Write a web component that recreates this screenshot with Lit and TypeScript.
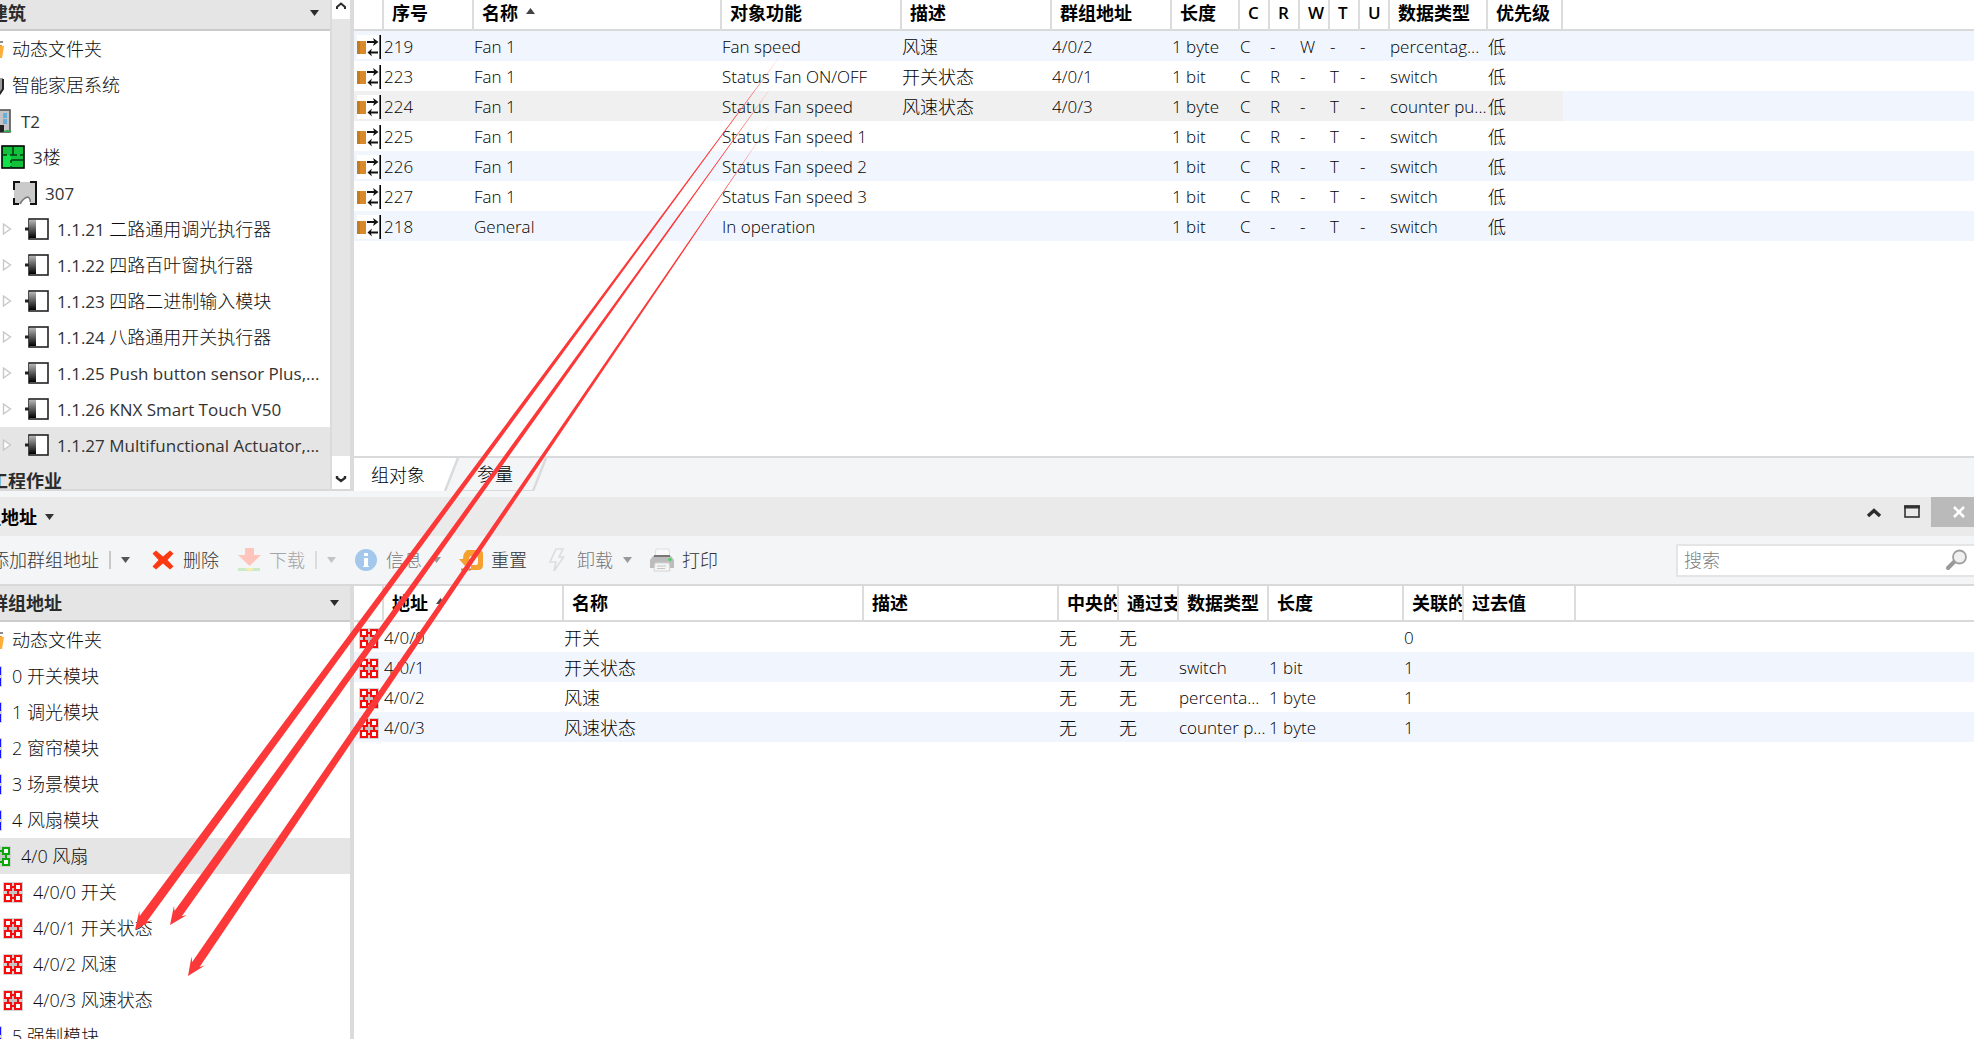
import { LitElement, html, css, svg, nothing } from "lit";
import { customElement } from "lit/decorators.js";
import { classMap } from "lit/directives/class-map.js";

interface TreeNode { level: number; icon: string; code?: string; name?: string; expander?: boolean; selected?: boolean }
interface Column { label: string; width?: number; sorted?: boolean; latin?: boolean }

const buildingTree: TreeNode[] = [
  { level: 0, icon: "folder", name: "动态文件夹" },
  { level: 0, icon: "home", name: "智能家居系统" },
  { level: 1, icon: "building", code: "T2" },
  { level: 2, icon: "floor", code: "3", name: "楼" },
  { level: 3, icon: "room", code: "307" },
  { level: 4, icon: "device", code: "1.1.21 ", name: "二路通用调光执行器", expander: true },
  { level: 4, icon: "device", code: "1.1.22 ", name: "四路百叶窗执行器", expander: true },
  { level: 4, icon: "device", code: "1.1.23 ", name: "四路二进制输入模块", expander: true },
  { level: 4, icon: "device", code: "1.1.24 ", name: "八路通用开关执行器", expander: true },
  { level: 4, icon: "device", code: "1.1.25 Push button sensor Plus,...", expander: true },
  { level: 4, icon: "device", code: "1.1.26 KNX Smart Touch V50", expander: true },
  { level: 4, icon: "device", code: "1.1.27 Multifunctional Actuator,...", expander: true, selected: true },
];

const groupTree: TreeNode[] = [
  { level: 0, icon: "folder", name: "动态文件夹" },
  { level: 0, icon: "main", code: "0 ", name: "开关模块" },
  { level: 0, icon: "main", code: "1 ", name: "调光模块" },
  { level: 0, icon: "main", code: "2 ", name: "窗帘模块" },
  { level: 0, icon: "main", code: "3 ", name: "场景模块" },
  { level: 0, icon: "main", code: "4 ", name: "风扇模块" },
  { level: 1, icon: "middle", code: "4/0 ", name: "风扇", selected: true },
  { level: 2, icon: "group", code: "4/0/0 ", name: "开关" },
  { level: 2, icon: "group", code: "4/0/1 ", name: "开关状态" },
  { level: 2, icon: "group", code: "4/0/2 ", name: "风速" },
  { level: 2, icon: "group", code: "4/0/3 ", name: "风速状态" },
  { level: 0, icon: "main", code: "5 ", name: "强制模块" },
];

const objectColumns: Column[] = [
  { label: "", width: 30 }, { label: "序号", width: 90 }, { label: "名称", width: 248, sorted: true },
  { label: "对象功能", width: 180 }, { label: "描述", width: 150 }, { label: "群组地址", width: 120 },
  { label: "长度", width: 68 }, { label: "C", width: 30, latin: true }, { label: "R", width: 30, latin: true },
  { label: "W", width: 30, latin: true }, { label: "T", width: 30, latin: true }, { label: "U", width: 30, latin: true },
  { label: "数据类型", width: 98 }, { label: "优先级", width: 75 },
];

const objectRows: string[][] = [
  ["219", "Fan 1", "Fan speed", "风速", "4/0/2", "1 byte", "C", "-", "W", "-", "-", "percentag...", "低"],
  ["223", "Fan 1", "Status Fan ON/OFF", "开关状态", "4/0/1", "1 bit", "C", "R", "-", "T", "-", "switch", "低"],
  ["224", "Fan 1", "Status Fan speed", "风速状态", "4/0/3", "1 byte", "C", "R", "-", "T", "-", "counter pu...", "低"],
  ["225", "Fan 1", "Status Fan speed 1", "", "", "1 bit", "C", "R", "-", "T", "-", "switch", "低"],
  ["226", "Fan 1", "Status Fan speed 2", "", "", "1 bit", "C", "R", "-", "T", "-", "switch", "低"],
  ["227", "Fan 1", "Status Fan speed 3", "", "", "1 bit", "C", "R", "-", "T", "-", "switch", "低"],
  ["218", "General", "In operation", "", "", "1 bit", "C", "-", "-", "T", "-", "switch", "低"],
];

const addressColumns: Column[] = [
  { label: "", width: 30 }, { label: "地址", width: 180, sorted: true }, { label: "名称", width: 300 },
  { label: "描述", width: 195 }, { label: "中央的", width: 60 }, { label: "通过支", width: 60 },
  { label: "数据类型", width: 90 }, { label: "长度", width: 135 }, { label: "关联的", width: 60 },
  { label: "过去值", width: 112 },
];

const addressRows: string[][] = [
  ["4/0/0", "开关", "", "无", "无", "", "", "0", ""],
  ["4/0/1", "开关状态", "", "无", "无", "switch", "1 bit", "1", ""],
  ["4/0/2", "风速", "", "无", "无", "percenta...", "1 byte", "1", ""],
  ["4/0/3", "风速状态", "", "无", "无", "counter p...", "1 byte", "1", ""],
];

const cluster = (color: string) => svg`
  <rect x="2" y="2" width="20" height="21" fill="#d2d2d2"/>
  <rect x="7" y="7" width="10" height="11" fill="#c4c4c4" stroke=${color} stroke-width="2"/>
  <path d="M10 9h4v2h2v4h-2v2h-4v-2H8v-4h2z" fill="#c4c4c4"/>
  <g fill="#fff" stroke=${color} stroke-width="2">
    <rect x="4" y="4" width="6" height="6"/><rect x="14" y="4" width="6" height="6"/>
    <rect x="4" y="15" width="6" height="6"/><rect x="14" y="15" width="6" height="6"/>
  </g>`;

const shapes: Record<string, unknown> = {
  folder: svg`<path d="M3 6h7l2 2h10v3H3z" fill="#e8962e"/><path d="M18 4h5v2h-5z" fill="#8a8a8a"/><path d="M2 9h22l-2 12H3z" fill="#ffae3a"/>`,
  home: svg`<path d="M3 5h20v11l-4 6H7l-4-6z" fill="#9a9a9a"/><path d="M23 6v10l-4 6" fill="none" stroke="#222" stroke-width="2"/>`,
  building: svg`<rect x="4" y="1" width="17" height="22" fill="#c4c4c4" stroke="#555" stroke-width="1.6"/>
    <g fill="#6aaede"><rect x="7" y="4" width="4" height="5"/><rect x="14" y="4" width="4" height="5"/><rect x="7" y="10" width="4" height="5"/><rect x="14" y="10" width="4" height="5"/></g>
    <rect x="9" y="16" width="6" height="7" fill="#222"/><path d="M14 23q4-4 9 0z" fill="#22b14c"/>`,
  floor: svg`<rect x="1" y="1" width="22" height="22" fill="#13c03c"/><path d="M1 10h9v13H1z" fill="#12e24a"/>
    <rect x="1" y="1" width="22" height="22" fill="none" stroke="#000" stroke-width="1.6"/>
    <path d="M12 1v9M1 10h5M9 10h7M19 10h4M10 15h13M10 15v3M10 21v2" fill="none" stroke="#033d12" stroke-width="1.6"/>`,
  room: svg`<rect x="1" y="1" width="22" height="22" fill="#cacaca"/><path d="M8 24q3-7 7-8l3 8z" fill="#fff"/>
    <path d="M7 1H1v8M17 1h6v22h-6M1 17v6h5" fill="none" stroke="#111" stroke-width="2"/>
    <path d="M7 23q3-6 8-7 3 2 2 5" fill="none" stroke="#777" stroke-width="1.4"/>`,
  device: svg`<defs><linearGradient id="g" x1="0" y1="0" x2="0" y2="1"><stop offset="0" stop-color="#b5b5b5"/><stop offset="1" stop-color="#000"/></linearGradient></defs>
    <rect x="4" y="2" width="19" height="20" fill="#fff" stroke="#222" stroke-width="1.6"/>
    <rect x="4" y="3" width="7" height="18" fill="url(#g)"/><path d="M0 12h4" stroke="#222" stroke-width="3"/>`,
  main: cluster("#1414ff"),
  middle: cluster("#0ba80b"),
  group: cluster("#f60c0c"),
  object: svg`<rect width="24" height="24" fill="#fff"/><rect x="0" y="6" width="9" height="13" fill="#d8892a"/><rect x="0" y="6" width="3" height="13" fill="#c27a24"/>
    <path d="M10 7h8M12 17.500h9" stroke="#111" stroke-width="1.8"/><path d="M16 3l5.500 4-5.500 4 1.300-4zM15 13.500L10.500 17.500l4.500 4-1.300-4z" fill="#111"/>
    <path d="M23.200 0v24" stroke="#000" stroke-width="1.600"/>`,
  remove: svg`<path d="M5 2.500l7 6 7-6 3.500 3-6 6.500 6 6.500-3.500 3-7-6-7 6-3.500-3 6-6.500-6-6.500z" fill="#fb3a12"/>`,
  download: svg`<path d="M8 0h9v7h7L12.500 18 1 7h7z" fill="#ffc4bc"/><path d="M1 20h22v3H1z" fill="#cdeac8"/><path d="M8 20l4.500 4 4.500-4z" fill="#f3efb0"/>`,
  info: svg`<circle cx="12" cy="12" r="11" fill="#a4c8ec"/><path d="M10 10h4v8h1v1H9v-1h1zM10 5h4v3h-4z" fill="#fff"/>`,
  reset: svg`<path d="M8 2h12q4 0 4 4v11q0 5-5 5h-7v-5h5q2 0 2-2v-5q0-2-2-2h-4q-3 0-3 3h4L6 18 0 11h4q0-6 4-9z" fill="#f5a02f"/><path d="M2 21.500h10" stroke="#c98a38" stroke-width="2"/>`,
  bolt: svg`<path d="M11 1h7l-4 8h4.500L9 23l2-9H5z" fill="#f6f6f6" stroke="#dcdddf" stroke-width="1.600"/>`,
  printer: svg`<path d="M6 1h13l1 8H5z" fill="#fafafa" stroke="#e0e0e0"/><path d="M3 8h18l3 4v8H0v-8z" fill="#bcbcbc"/><path d="M4 7h16v2H4z" fill="#777"/><circle cx="20" cy="11.500" r="1.600" fill="#37d957"/><path d="M5 15h14l1 8H4z" fill="#f5f5f5" stroke="#d4d4d4"/><path d="M7 18h9M7 20.500h8" stroke="#c4c4c4"/>`,
  search: svg`<path d="M3 20l8-8" stroke="#999" stroke-width="4" stroke-linecap="round"/><circle cx="14.500" cy="9" r="6.500" fill="#f0f0f0" stroke="#a0a0a0" stroke-width="1.800"/>`,
  up: svg`<path d="M6 16l6-5.500 6 5.500" fill="none" stroke="#2c2c2c" stroke-width="3.400"/>`,
  scrollUp: svg`<path d="M8 14v-2l4-3.500 4 3.500v2" fill="none" stroke="#2c2c2c" stroke-width="2"/>`,
  scrollDown: svg`<path d="M8 9v2l4 3 4-3v-2" fill="none" stroke="#2c2c2c" stroke-width="2.400"/>`,
  maximize: svg`<rect x="5" y="6" width="14" height="11" fill="none" stroke="#333" stroke-width="1.600"/><path d="M4 7h16" stroke="#333" stroke-width="3"/>`,
  close: svg`<path d="M7 7l10 10M17 7L7 17" stroke="#fff" stroke-width="2.600"/>`,
  expander: svg`<path d="M8.500 7l7 5-7 5z" fill="#fff" stroke="#c8c8c8" stroke-width="1.400"/>`,
};

const icon = (name: string) =>
  html`<svg class="icon" width="24" height="24" viewBox="0 0 24 24" aria-hidden="true">${shapes[name]}</svg>`;

const caret = (direction = "down") =>
  html`<svg class="caret" width="9" height="6" viewBox="0 0 9 6" aria-hidden="true">
    <path d=${direction === "down" ? "M0 0h9L4.500 6z" : "M0 6h9L4.500 0z"} fill="currentColor"></path></svg>`;

const hasHan = (text: string) => /[\u4e00-\u9fff]/.test(text);

/** Tapered arrow from a fine tail to a barbed head. */
const arrow = (x1: number, y1: number, x2: number, y2: number) => {
  const length = Math.hypot(x2 - x1, y2 - y1);
  const ux = (x2 - x1) / length, uy = (y2 - y1) / length;
  const at = (back: number, side: number) =>
    `${(x2 - ux * back - uy * side).toFixed(1)},${(y2 - uy * back + ux * side).toFixed(1)}`;
  return svg`<polygon fill="#fd3838" points=${[
    at(length, 0), at(14, 4.5), at(18, 8), at(0, 0), at(18, -8), at(14, -4.5),
  ].join(" ")}/>`;
};

const base = css`
  * { box-sizing: border-box; }
  button { border: 0; padding: 0; background: none; font: inherit; color: inherit; display: flex; align-items: center; }
  svg { display: block; flex: none; }
`;

@customElement("ets-tree")
class EtsTree extends LitElement {
  static properties = { heading: {}, nodes: { attribute: false } };
  declare heading: string;
  declare nodes: TreeNode[];

  static styles = [base, css`
    :host { display: flex; flex-direction: column; flex: 1; min-width: 0; overflow: hidden; color: #0c0c0c; }
    .heading { display: flex; align-items: center; justify-content: space-between; flex: none; height: var(--head-height, 36px);
      padding: 0 11px var(--head-drop, 0) 0; background: #e5e5e5; border-bottom: 2px solid #cbcbcb; font-weight: 700; color: #2b2b2b; }
    .heading .label { margin-left: -10px; }
    .list { list-style: none; margin: 0; padding: 0; }
    .node { display: flex; align-items: center; height: 36px; white-space: nowrap; }
    .node.selected { background: #e5e5e5; }
    .icon { margin-right: 8px; }
    .level-0 .pic { margin-left: -20px; }
    .level-1 .pic { margin-left: -11px; }
    .level-2 .pic { margin-left: 1px; }
    .level-3 .pic { margin-left: 13px; }
    .level-4 .pic { margin-left: 12px; }
    .expander { width: 24px; margin: 0 -6px 0 -5px; }
    .expander .icon { margin: 0; }
    .latin { font-size: var(--latin-size, 17px); font-weight: var(--latin-weight, 300); color: var(--latin-color, inherit); white-space: pre; }
  `];

  render() {
    return html`
      <div class="heading"><span class="label">${this.heading}</span>${caret()}</div>
      <ul class="list">
        ${this.nodes.map((n) => html`
          <li class=${classMap({ node: true, selected: !!n.selected, [`level-${n.level}`]: true })}>
            ${n.expander ? html`<button class="expander" aria-label="展开">${icon("expander")}</button>` : nothing}
            <span class="pic">${icon(n.icon)}</span>
            <span class="text">${n.code ? html`<span class="latin">${n.code}</span>` : nothing}${n.name ?? nothing}</span>
          </li>`)}
      </ul>
      <slot></slot>`;
  }
}

@customElement("ets-grid")
class EtsGrid extends LitElement {
  static properties = { columns: { attribute: false }, rows: { attribute: false }, glyph: {}, selected: { type: Number }, stripe: {} };
  declare columns: Column[];
  declare rows: string[][];
  declare glyph: string;
  declare selected: number;
  declare stripe: string;

  static styles = [base, css`
    :host { display: block; flex: 1; min-height: 0; overflow: hidden; background: #fff; color: #000; }
    table { width: 100%; table-layout: fixed; border-collapse: separate; border-spacing: 0; }
    th, td { text-align: left; white-space: nowrap; line-height: 24px; }
    th { height: var(--head-height, 36px); padding: 0 0 var(--head-drop, 0) 8px; overflow: hidden; border-right: 2px solid #dcdcdc; border-bottom: 2px solid #d9d9db; font-weight: 700; }
    th.filler { border-right: 0; }
    th .caret { display: inline-block; margin-left: 8px; vertical-align: 6px; color: #444; }
    td { height: 30px; padding: 1px 0 0; }
    .latin { font-size: 17px; }
    th.latin { font-weight: 600; }
    td .icon { margin: 0 0 0 3px; }
    .odd tbody tr:nth-child(odd) td, .even tbody tr:nth-child(even) td { background: #f1f6fe; }
    .odd tbody tr.selected td:not(.filler) { background: #f0f0f0; }
  `];

  render() {
    return html`
      <table class=${this.stripe}>
        <colgroup>${this.columns.map((c) => html`<col style="width:${c.width}px">`)}<col></colgroup>
        <thead><tr>
          ${this.columns.map((c) => html`<th scope="col" class=${c.latin ? "latin" : ""}>${c.label}${c.sorted ? caret("up") : nothing}</th>`)}
          <th class="filler"></th>
        </tr></thead>
        <tbody>
          ${this.rows.map((r, i) => html`<tr class=${i === this.selected ? "selected" : ""}>
            <td>${icon(this.glyph)}</td>
            ${r.map((t) => html`<td class=${hasHan(t) ? "" : "latin"}>${t}</td>`)}
            <td class="filler"></td>
          </tr>`)}
        </tbody>
      </table>`;
  }
}

@customElement("app-root")
class AppRoot extends LitElement {
  static styles = [base, css`
    :host { display: grid; grid-template-rows: minmax(0, 491fr) minmax(0, 548fr); position: relative; height: 100vh; overflow: hidden;
      font: 300 18px/24px "Open Sans", "Noto Sans CJK SC", sans-serif; background: #fff; color: #000; }
    .panel { display: flex; min-height: 0; }
    .side { display: flex; flex: none; width: 354px; border-right: 4px solid #dbdbdb; background: #fff; overflow: hidden; }
    .main { display: flex; flex-direction: column; flex: 1; min-width: 0; }
    .upper { --head-height: 31px; --head-drop: 4px; --latin-weight: 400; --latin-color: #333; }
    .upper ets-tree, .scroll { border-bottom: 2px solid #d8d8d8; }
    .section { flex: 1; background: #e5e5e5; font-weight: 700; padding-top: 6px; color: #2b2b2b; }
    .section span { margin-left: -10px; }
    .scroll { display: flex; flex-direction: column; justify-content: space-between; flex: none; width: 20px; border-left: 2px solid #dbdbdb; background: #e5e5e5; }
    .scroll button { width: 18px; justify-content: center; background: #fff; }
    .scroll .to-top { height: 19px; padding-bottom: 6px; }
    .scroll .to-end { height: 33px; padding-top: 12px; }
    .tabs { display: flex; flex: none; height: 35px; border-top: 2px solid #d9dadc; background: #f4f5f7; }
    .tab { padding: 0 0 0 17px; color: #000; }
    .tab.active { width: 90px; background: #fff; }
    .tab.other { width: 72px; border-bottom: 1px solid #d9dadc; }
    .lower { display: flex; flex-direction: column; min-height: 0; background: #f4f5f7; padding-top: 6px; --latin-size: 18px; }
    .title { display: flex; flex: none; justify-content: space-between; height: 39px; background: #eaeaea; }
    .title h2 { display: flex; align-items: center; gap: 8px; margin: 0 0 0 -17px; font-size: 18px; font-weight: 700; color: #000; }
    .title h2 .caret { color: #333; }
    .window { display: flex; }
    .window button { width: 38px; height: 30px; justify-content: center; }
    .window .close { width: 43px; padding-left: 12px; background: #bababa; }
    .toolbar { display: flex; align-items: center; flex: none; height: 50px; border-bottom: 2px solid #d9d9db; color: #333; }
    .toolbar .caret { color: #555; }
    .tool { display: flex; align-items: center; gap: 10px; margin-right: 18px; }
    .tool button { gap: 8px; height: 36px; }
    .tool.first { margin: 0 21px 0 -9px; }
    .tool .bar { width: 2px; height: 18px; background: #c8c8c8; }
    .tool.off { color: #a4a4a4; }
    .tool.off .caret { color: #c4c4c4; }
    .tool.off .bar { background: #dcdcdc; }
    .tool.dim { color: #777; }
    .tool.dim .caret { color: #999; }
    .search { display: flex; align-items: center; width: 300px; height: 33px; margin: 0 -2px 0 auto; padding-right: 5px; border: 2px solid #e5e5e5; background: #fff; }
    .search input { flex: 1; min-width: 0; border: 0; padding: 0 0 0 6px; outline: 0; font: inherit; background: none; color: #333; }
    .search input::placeholder { color: #808080; opacity: 1; }
    .lower .panel { flex: 1; }
    .links { position: absolute; left: 0; top: 0; pointer-events: none; }
  `];

  private tool(glyph: string, label: string, options: { tone?: string; bar?: boolean; menu?: boolean } = {}) {
    return html`<div class="tool ${options.tone ?? ""}">
      <button>${icon(glyph)}<span>${label}</span></button>
      ${options.bar ? html`<span class="bar"></span>` : nothing}
      ${options.menu ? html`<button aria-label="${label}选项">${caret()}</button>` : nothing}
    </div>`;
  }

  private slant(active: boolean) {
    return html`<svg width="16" height="33" viewBox="0 0 16 33" aria-hidden="true">
      ${active ? svg`<path d="M0 0h14L1 33H0z" fill="#fff"/>` : nothing}
      <path d="M14 0L1 33" stroke="#d9dadc" stroke-width="2.500"></path></svg>`;
  }

  render() {
    return html`
      <section class="panel upper">
        <div class="side">
          <ets-tree heading="建筑" .nodes=${buildingTree}><div class="section"><span>工程作业</span></div></ets-tree>
          <div class="scroll">
            <button class="to-top" aria-label="向上滚动">${icon("scrollUp")}</button>
            <button class="to-end" aria-label="向下滚动">${icon("scrollDown")}</button>
          </div>
        </div>
        <div class="main">
          <ets-grid .columns=${objectColumns} .rows=${objectRows} glyph="object" .selected=${2} stripe="odd"></ets-grid>
          <div class="tabs">
            <button class="tab active">组对象</button>${this.slant(true)}
            <button class="tab other">参量</button>${this.slant(false)}
          </div>
        </div>
      </section>
      <section class="lower">
        <header class="title">
          <h2>组地址 ${caret()}</h2>
          <div class="window">
            <button aria-label="折叠">${icon("up")}</button>
            <button aria-label="最大化">${icon("maximize")}</button>
            <button class="close" aria-label="关闭">${icon("close")}</button>
          </div>
        </header>
        <div class="toolbar">
          <div class="tool first"><button>添加群组地址</button><span class="bar"></span><button aria-label="添加选项">${caret()}</button></div>
          ${this.tool("remove", "删除")}
          ${this.tool("download", "下载", { tone: "off", bar: true, menu: true })}
          ${this.tool("info", "信息", { tone: "dim", menu: true })}
          ${this.tool("reset", "重置")}
          ${this.tool("bolt", "卸载", { tone: "dim", menu: true })}
          ${this.tool("printer", "打印")}
          <label class="search"><input type="text" placeholder="搜索" aria-label="搜索">${icon("search")}</label>
        </div>
        <div class="panel">
          <div class="side"><ets-tree heading="群组地址" .nodes=${groupTree}></ets-tree></div>
          <div class="main"><ets-grid .columns=${addressColumns} .rows=${addressRows} glyph="group" .selected=${-1} stripe="even"></ets-grid></div>
        </div>
      </section>
      <svg class="links" width="800" height="1000" viewBox="0 0 800 1000" aria-hidden="true">
        ${arrow(781, 55, 135, 930)}${arrow(775, 82, 170, 925)}${arrow(771, 122, 188, 976)}
      </svg>`;
  }
}
